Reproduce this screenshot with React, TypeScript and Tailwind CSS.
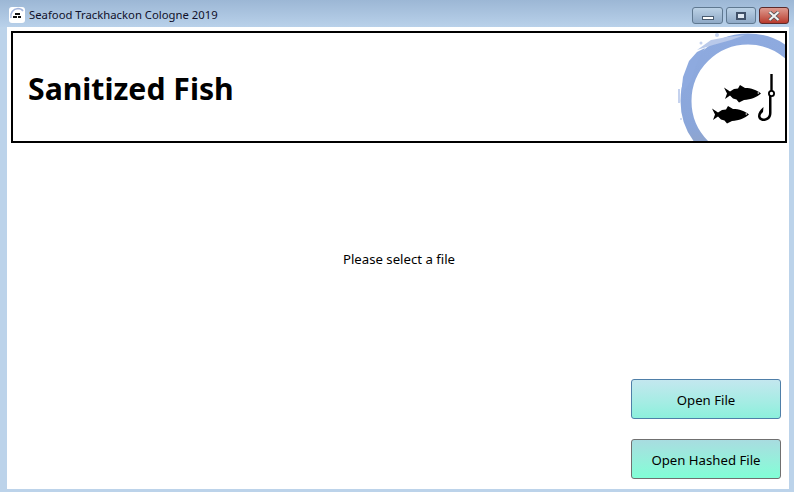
import React from "react";

const fishPath =
  "M0 2.5 L6 6.5 L10 4 L14 3.5 L16 0 L21 3 C27 3 33 5 37 8.5 C33 12 27 14.5 20 15 L15 17.5 L12.5 14.5 L9 13.5 L6 10.5 L1 14 L3 8.5 Z";

function Logo() {
  return (
    <svg width="110" height="108" viewBox="0 0 110 108" className="absolute right-0 top-0">
      <defs>
        <linearGradient id="ring" x1="0" y1="0" x2="0" y2="1">
          <stop offset="0" stopColor="#8eaadf" />
          <stop offset="0.7" stopColor="#8aa6da" />
          <stop offset="1" stopColor="#96a3bd" />
        </linearGradient>
      </defs>
      {/* brush ring */}
      <circle cx="73" cy="68" r="62" fill="none" stroke="url(#ring)" strokeWidth="11" />
      <path d="M6 62 L8 44 L14 28 L22 19 L30 15 L22 30 L16 48 Z" fill="#8eaadf" />
      <path d="M22 17 L36 7 L52 4 L70 2 L56 7 L38 12 Z" fill="#b9c9ea" />
      <path d="M3 56 L5 56 L5 70 L3 70 Z" fill="#c5d2ee" />
      <circle cx="42" cy="2" r="2" fill="#c5d2ee" />
      <circle cx="26" cy="10" r="1.5" fill="#c5d2ee" />
      <circle cx="6" cy="86" r="1" fill="#c5d2ee" />
      {/* fish */}
      <path d={fishPath} transform="translate(49 52)" fill="#000" />
      <path d={fishPath} transform="translate(37 73)" fill="#000" />
      <circle cx="83.3" cy="60" r="0.8" fill="#fff" />
      <circle cx="71.3" cy="81" r="0.8" fill="#fff" />
      {/* hook */}
      <path d="M96.5 41 V58" stroke="#000" strokeWidth="2.4" fill="none" />
      <circle cx="96.5" cy="60.5" r="2.6" stroke="#000" strokeWidth="1.8" fill="#fff" />
      <path
        d="M96.5 63 V80 C96.5 86 92 88 88.5 88 C85 88 83 85.5 83 83 C83 80 85 77 88.5 74 L88 79 C86.5 80.5 85.5 81.5 85.5 83 C85.5 84.5 87 85.5 88.5 85.5 C91 85.5 94 84 94 80 V63 Z"
        fill="#000"
      />
    </svg>
  );
}

function AppIcon() {
  return (
    <svg width="16" height="16" viewBox="0 0 16 16">
      <rect x="0" y="0" width="16" height="16" rx="3" fill="#fff" />
      <path d="M2 11 C1 6 4 2 9 1.5 C11 1.5 13 2.5 14 4" fill="none" stroke="#a3b5dc" strokeWidth="1.6" />
      <rect x="6" y="6" width="5" height="2" fill="#111" />
      <rect x="4" y="9" width="4" height="2" fill="#111" />
      <rect x="9" y="9" width="3" height="2" fill="#111" />
    </svg>
  );
}

function WindowButtons() {
  return (
    <div className="flex gap-[3px] pt-[7px] pr-[5px]">
      <div className="flex h-[17px] w-[31px] items-end justify-center rounded-[3px] border border-[#5f7890] bg-linear-to-b from-[#bcd2e6] to-[#8fa9c6] pb-[3px]">
        <div className="h-[4px] w-[12px] border border-[#4a5c70] bg-white" />
      </div>
      <div className="flex h-[17px] w-[30px] items-center justify-center rounded-[3px] border border-[#5f7890] bg-linear-to-b from-[#bcd2e6] to-[#8fa9c6]">
        <div className="h-[8px] w-[10px] border-2 border-[#3f5068] bg-[#dfe8f2]" />
      </div>
      <div className="flex h-[17px] w-[30px] items-center justify-center rounded-[3px] border border-[#5c2a2a] bg-linear-to-b from-[#dd9a90] to-[#b8382c]">
        <svg width="14" height="10" viewBox="0 0 14 10">
          <path d="M2.5 1 L11.5 9 M11.5 1 L2.5 9" stroke="#4a4f55" strokeWidth="3.6" />
          <path d="M2.5 1 L11.5 9 M11.5 1 L2.5 9" stroke="#f2f2f2" strokeWidth="2.2" />
        </svg>
      </div>
    </div>
  );
}

export default function App() {
  return (
    <div className="flex h-[492px] w-[794px] flex-col overflow-hidden bg-[#bcd3ea] font-['Noto_Sans',sans-serif] text-black">
      <div className="flex h-[27px] shrink-0 items-start justify-between bg-linear-to-b from-[#9cb7d5] to-[#b9d1ea]">
        <div className="flex items-center gap-[4px] pl-[9px] pt-[7px]">
          <AppIcon />
          <span className="text-[11.3px] leading-[16px] text-[#10102a]">Seafood Trackhackon Cologne 2019</span>
        </div>
        <WindowButtons />
      </div>

      <div className="mb-[3px] ml-[7px] mr-[5px] flex min-h-0 flex-1 flex-col bg-white pl-[4px] pr-[2px] pt-[4px]">
        <div className="relative flex h-[112px] shrink-0 items-center overflow-hidden border-2 border-black bg-white pl-[15px] pt-[5px]">
          <h1 className="text-[30.2px] font-bold leading-none">Sanitized Fish</h1>
          <Logo />
        </div>

        <div className="flex flex-1 flex-col">
          <div className="flex h-[232px] items-center justify-center">
            <p className="text-[13.2px] leading-[18px]">Please select a file</p>
          </div>
          <div className="flex flex-col items-end gap-[20px] pr-[6px] pt-[4px]">
            <button className="h-[40px] w-[150px] rounded-[3px] border border-[#4f7fa8] bg-linear-to-b from-[#c3e7ef] to-[#8bf0dc] pt-[3px] text-[13.2px]">
              Open File
            </button>
            <button className="h-[40px] w-[150px] rounded-[3px] border border-[#707070] bg-linear-to-b from-[#a8dce0] to-[#80ffd6] pt-[3px] text-[13.2px]">
              Open Hashed File
            </button>
          </div>
        </div>
      </div>
    </div>
  );
}
